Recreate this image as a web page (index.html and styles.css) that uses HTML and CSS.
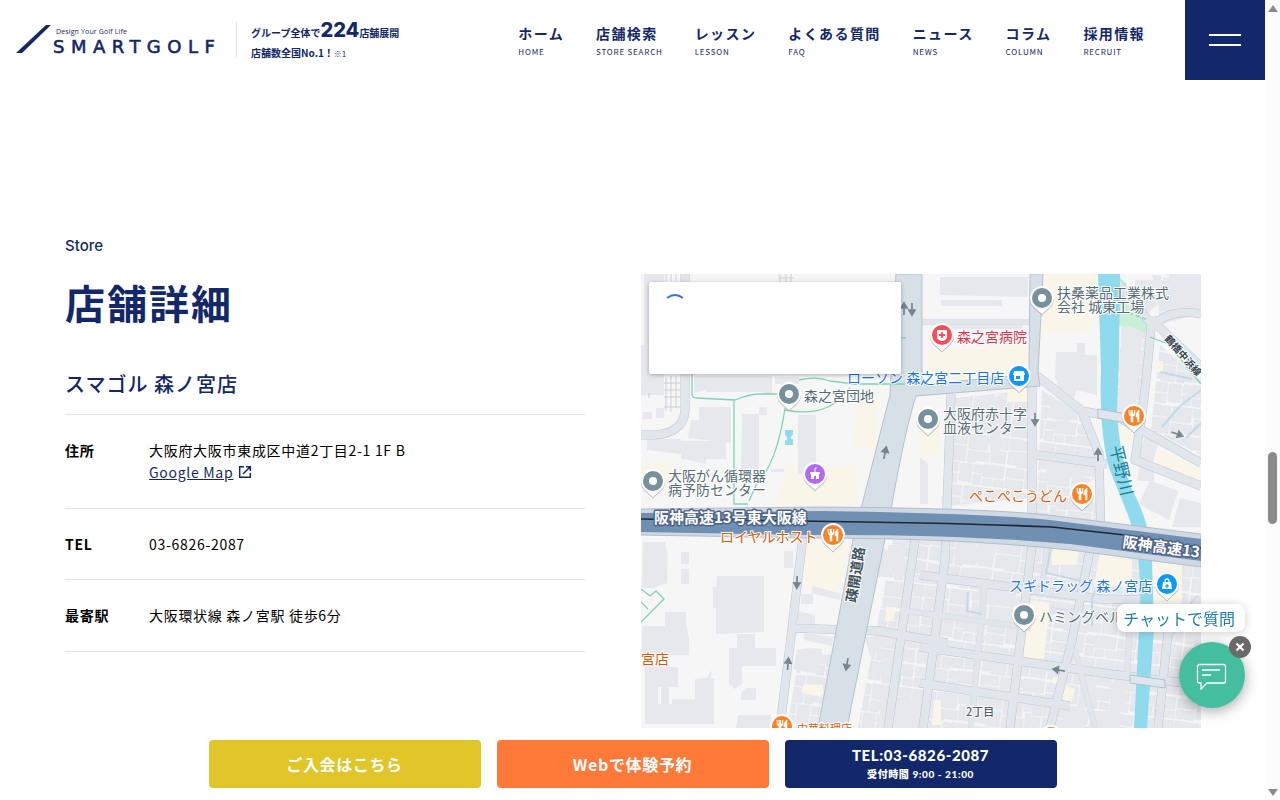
FILE: index.html
```html
<!DOCTYPE html>
<html lang="ja">
<head>
<meta charset="utf-8">
<meta name="viewport" content="width=device-width, initial-scale=1">
<title>スマゴル 森ノ宮店 | SMART GOLF</title>
<link rel="stylesheet" href="styles.css">
</head>
<body>
<div class="page">
  <header class="header">
    <a class="logo" href="#" aria-label="SMART GOLF">
      <svg width="206" height="36" viewBox="0 0 206 36" aria-hidden="true">
        <path d="M30 3h5L6 31H0z"/>
        <text class="logo-tag" x="40" y="12">Design Your Golf Life</text>
        <text class="logo-name" x="37" y="31">SMARTGOLF</text>
      </svg>
    </a>
    <p class="claim">グループ全体で<b>224</b>店舗展開<br>店舗数全国No.1！<small>※1</small></p>
    <nav class="nav">
      <a href="#">ホーム<span>HOME</span></a>
      <a href="#">店舗検索<span>STORE SEARCH</span></a>
      <a href="#">レッスン<span>LESSON</span></a>
      <a href="#">よくある質問<span>FAQ</span></a>
      <a href="#">ニュース<span>NEWS</span></a>
      <a href="#">コラム<span>COLUMN</span></a>
      <a href="#">採用情報<span>RECRUIT</span></a>
    </nav>
    <button class="menu" type="button" aria-label="メニュー"><i></i><i></i></button>
  </header>

  <main class="main">
    <section class="detail">
      <p class="eyebrow">Store</p>
      <h1>店舗詳細</h1>
      <h2>スマゴル 森ノ宮店</h2>
      <dl>
        <div class="row"><dt>住所</dt><dd>大阪府大阪市東成区中道2丁目2-1 1F B<br><a href="#">Google Map</a><svg class="ext" width="14" height="14" viewBox="0 0 14 14" aria-hidden="true"><path d="M6 1.700H1.700v10.600h10.600V8M8 1.700h4.300V6M12 2L5 9"/></svg></dd></div>
        <div class="row"><dt>TEL</dt><dd>03-6826-2087</dd></div>
        <div class="row"><dt>最寄駅</dt><dd>大阪環状線 森ノ宮駅 徒歩6分</dd></div>
      </dl>
    </section>

    <section class="map" aria-label="地図">
      <svg class="map-art" viewBox="641 274 560 454" preserveAspectRatio="xMinYMin slice">
        <defs>
          <path id="drop" d="M0 16.500C-2 13-12 9-12 0A12 12 0 1 1 12 0C12 9 2 13 0 16.500z"/>
          <g id="pin"><use href="#drop" fill="#8b949c" opacity=".7" y="1"/><use href="#drop" fill="#fff"/></g>
          <g id="place"><use href="#pin"/><circle r="10" fill="#78909c"/><circle r="4" fill="#fff"/></g>
          <g id="food"><use href="#pin"/><circle r="10" fill="#ff8126"/><path d="M-5-6v4q0 2 2 2v6h2v-6q2 0 2-2v-4M-2-6v5M5-6q-3 1-3 7h1.500v5H5z" fill="#fff" stroke="#fff" stroke-width=".6"/><path d="M-3.800-6v3.500M-.4-6v3.500" stroke="#ff8126" stroke-width="1"/></g>
          <g id="arrow"><path d="M0 6V-3M-3-1L0-6L3-1z" fill="#78858f" stroke="#78858f" stroke-width="1.700"/></g>
          <pattern id="houses" width="66" height="52" patternUnits="userSpaceOnUse" patternTransform="rotate(7)">
            <path d="M0 0h14v11H0zM15 1h9v10h-9zM26 0h19v15H26zM47 0h7v9h-7zM55 0h10v12H55zM0 13h9v13H0zM10 13h14v15H10zM26 17h8v11h-8zM35 17h12v9H35zM49 11h5v15h-5zM55 14h9v12h-9zM0 30h18v9H0zM20 30h12v18H20zM34 30h8v8h-8zM43 29h21v12H43zM0 41h8v9H0zM9 41h9v9H9zM34 40h8v10h-8zM44 43h9v7h-9zM55 43h10v7H55z" fill="#e6e8ed" stroke="#dcdfe6" stroke-width=".6"/>
          </pattern>
        </defs>
        <rect x="641" y="274" width="560" height="454" fill="#f6f6f6"/>

        <path d="M893 540l162 3 146 25v160H858zM955 398l74-8v108l-80 8zM1042 390l40 25 16 35 2 72-64-6zM1122 320l25 8-9 90-22-6zM1160 345l41 35v75l-50-25zM1152 274h49v40l-40 10zM800 650l35 4-18 74h-30z" fill="url(#houses)"/>

        <!-- commercial blocks -->
        <g fill="#f9f5e8">
          <path d="M855 390h22v58h-24zM641 463h33v20h-33zM785 480l2-14h70v39h-82zM928 350l102-5-2 25-100 12zM1043 274h54v42l-12 16h-45zM920 415h20v38l-14 4-6-5zM1007 389h22v13h-22zM1157 450l44 15v18l-43-9zM805 544h45l-10 44h-35zM804 684l19 1v12l-22-4zM1026 600l24 3-6 56-28-2zM1100 552l32 8v26h-38zM1148 562h34v40l-12 14h-22zM781 500h60v5h-62zM1050 545l29 2-2 18h-25zM1154 361h9v11h-9zM934 700h7v25h-9zM1083 485l14-7v24l-18-4zM1120 422h15l-8 28-9-5zM1053 674h11v10h-11zM1065 685l10 4-3 13h-10zM886 607h10l-3 14h-8z"/>
        </g>
        <path d="M1119 276l8 8-1 20 22 14-1 16-15-7-14-1z" fill="#c9f0d6"/>

        <!-- large buildings -->
        <g fill="#e7e8ed">
          <path d="M644 274h20v121h-23v-50h3zM694 376h78v18h-8v-2h-58v-2l-12 3zM775 377h24v7h-24zM699 407h32v36l-43-5 3-18h8zM742 414h17v-7h8v8h-8v56l-18-2zM798 415h18v58l-10 4-8-4zM681 441h45v18h-20v5l-18-4-7-1zM647 439h34v15l-34-4zM656 408h8v10h-8zM643 412h9v7h-9zM771 469h13v3h-13z"/>
          <path d="M940 277h88v20l-88-2zM941 300h61v6h-61zM950 324h72v5h-72zM1056 352h21v-9h8v12h12v40l-21-5v-10h-21zM1058 374l21 7-5 17-17-5zM1122 327l20 4-3 59-5 18h-15z"/>
          <path d="M643 542h22l3 14-1 27-14 5h-11zM681 552h8v12h-8zM681 569h8v15h-8zM717 576h47v56l-48 2V608h-3V587h3zM665 612h21v11l3 15v17h-47V626h23zM737 634h18v14h21v18h-34v18l-7 5-6-5v-36h8zM645 667h33v20h-9v17h-8v-17h-3v17h14v-5h23v-20h19v45h-69zM699 678h8l4-8v29h-8v-13h-4zM746 688h10v12h-15v-7zM738 715h33v13h-35z"/>
          <path d="M877 545l11 5v27h-11zM888 545h17v30l-17-2zM813 586l29 8-2 6-29-7zM801 594h12v10h-12zM798 611l17 4v10h-18zM804 633l29 4-1 9-28-6zM797 650l15-2 10 1v12l-8 12-21-4zM881 660h22l-5 22h-17zM882 699h39v29h-43zM865 638l15-3v15l-10 6zM784 551h9v17h-9z"/>
          <path d="M1001 397h-18l-6 32h13v25h10zM1048 460h38v17h-40zM1051 398l21 8-3 16-20-4zM1145 437l14 3-6 22-15-5zM1135 280h28v20l-15 13-13-10zM1169 274h32v40h-32zM1140 465h14v16h-17zM1150 480l28 11-9 29-30-16zM1180 498l21 5v24h-29zM920 457l8 7v40h-8z"/>
          <path d="M957 543l38 7-2 14-36-2v-8h-4zM978 588h38v17h-37zM1045 665h25v12h-21zM1080 680h16v24h-16zM1110 681l15 2v20h-15zM1059 706h26v20h-20zM1092 711h28v17h-32z"/>
        </g>

        <!-- local streets -->
        <g class="street-edge">
          <path d="M641 435h13q33-2 31-30V274M951 394L945 560L923 728M1032 380V545L1010 728M1036 375L1082 411L1120 418L1201 463M1082 411L1099 454L1101 540M1030 454l77 10M1152 316Q1145 400 1138 440L1135 460L1201 486M1154 322l47 45M1110 274l43 52Q1170 308 1201 314M803 536L780 728M789 628l90 3 68 12M915 540l-27 188M920 575l180 24 40 1M920 647l190 27 91 11M1092 540L1072 640L1050 728M920 683l150 23M1201 598l-33 35-10 95"/>
          <path class="lane" d="M920 322h110M1050 610l86 10M1047 543l-5 50M985 580l-14 148M1130 622l-3 52M900 610l130 18M1075 650l20 78"/>
        </g>
        <g class="street">
          <path d="M641 435h13q33-2 31-30V274M951 394L945 560L923 728M1032 380V545L1010 728M1036 375L1082 411L1120 418L1201 463M1082 411L1099 454L1101 540M1030 454l77 10M1152 316Q1145 400 1138 440L1135 460L1201 486M1154 322l47 45M1110 274l43 52Q1170 308 1201 314M803 536L780 728M789 628l90 3 68 12M915 540l-27 188M920 575l180 24 40 1M920 647l190 27 91 11M1092 540L1072 640L1050 728M920 683l150 23M1201 598l-33 35-10 95"/>
          <path class="lane" d="M920 322h110M1050 610l86 10M1047 543l-5 50M985 580l-14 148M1130 622l-3 52M900 610l130 18M1075 650l20 78"/>
        </g>

        <!-- river -->
        <path d="M1098 274h22l-1 85-2 52Q1119 451 1130 486Q1150 520 1152 560L1154 628L1147 728H1134L1140 610Q1142 552 1128 515L1109 468Q1099 430 1101 370z" fill="#90daee"/>
        <path d="M1098 409l40 7v9l-40-7zM1130 675l35 5v8l-35-5z" fill="#e0e6ed" stroke="#b4bfcb" stroke-width="1"/>

        <!-- main roads -->
        <path d="M896 274h26v111l107-11 1-100h13l-5 100 2 12-124 10q-10 30-24 108L847 728H818L853 540L890 395z" fill="#d7e0e7" stroke="#b5c1cb" stroke-width="1"/>

        <!-- paths and rails -->
        <g fill="none" stroke="#82d2b2" stroke-width="1.300">
          <path d="M692 374v20q0 4 5 4l38 2q14-6 25-6h33M799 380q18-4 31 1l25 3h50M785 410q32 6 50-7l15-15M734 400v104h14M785 408q-8 55-28 75l-8 18M641 589l9 7 6-5 8 8-23 23M641 602l7 7M896 338h10"/>
          <path d="M1150 337l18 7 33 40"/><path d="M1129 313l19 7" stroke-dasharray="4 3"/>
        </g>
        <path d="M666 378v33M671 376v36M676 376v32M664 383h17M664 390h17M664 397h17M664 407h17M666 274v7M671 274v7M676 274v7M778 278h16M780 274v8M786 274v8M791 274v8M649 393v5" fill="none" stroke="#cacfd7"/>
        <path d="M785 430h8v4l-2 3v2h2v6h-8v-5h2v-3l-2-2z" fill="#90daee"/>
        <path d="M1160 372l32 7M1162 427l17-20 22-17M1186 438l15-15M968 592l-1 19 15 3M1095 591l-3 8v27M1053 540l-7 33 35 8" fill="none" stroke="#c5d8e7" stroke-width="2"/>

        <!-- expressway -->
        <path d="M641 509L820 507Q980 508 1048 515L1201 534V567L1070 550Q960 538 810 538L641 535z" fill="#d0d9e3" stroke="#b1bdcb"/>
        <path d="M641 513L820 511Q980 513 1050 520L1201 539V561L1070 544Q960 534 810 535L641 532z" fill="#7090b3"/>
        <path d="M641 519L800 521Q960 523 1052 527L1125 535L1201 548" fill="none" stroke="#20272f" stroke-width="1.600"/>

        <use href="#arrow" transform="translate(904 309)"/><use href="#arrow" transform="translate(912 309) rotate(180)"/>
        <use href="#arrow" transform="translate(885 453) rotate(12)"/><use href="#arrow" transform="translate(1035 419) rotate(180)"/>
        <use href="#arrow" transform="translate(1098 455)"/><use href="#arrow" transform="translate(1177 434) rotate(110)"/>
        <use href="#arrow" transform="translate(797 582) rotate(182)"/><use href="#arrow" transform="translate(788 664) rotate(5)"/>
        <use href="#arrow" transform="translate(847 664) rotate(190)"/><use href="#arrow" transform="translate(1059 670) rotate(-80)"/>

        <g class="label">
          <text x="1057" y="298">扶桑薬品工業株式</text><text x="1057" y="312">会社 城東工場</text>
          <text x="804" y="401">森之宮団地</text>
          <text x="943" y="419">大阪府赤十字</text><text x="943" y="433">血液センター</text>
          <text x="668" y="481">大阪がん循環器</text><text x="668" y="495">病予防センター</text>
          <text x="1039" y="622">ハミングベル</text>
          <text x="957" y="342" class="red">森之宮病院</text>
          <text x="847" y="383" class="blue">ローソン 森之宮二丁目店</text>
          <text x="1009" y="591" class="blue">スギドラッグ 森ノ宮店</text>
          <text x="969" y="501" class="orange">ぺこぺこうどん</text>
          <text x="720" y="542" class="orange">ロイヤルホスト</text>
          <text x="641" y="664" class="orange">宮店</text>
          <text x="797" y="733" class="orange small">中華料理店</text>
          <text x="966" y="716" class="small dark">2丁目</text>
          <text class="road" transform="translate(856 603) rotate(-81)">疎開道路</text>
          <text class="rail" transform="translate(1164 339) rotate(49)">鶴橋中浜線</text>
          <text class="river" transform="translate(1110 447) rotate(77)">平野川</text>
          <text class="express" x="654" y="523">阪神高速13号東大阪線</text>
          <text class="express" transform="translate(1122 547) rotate(8)">阪神高速13</text>
        </g>

        <use href="#place" x="1042" y="298"/><use href="#place" x="789" y="394"/><use href="#place" x="928" y="419"/>
        <use href="#place" x="653" y="481"/><use href="#place" x="1024" y="615"/>
        <use href="#food" x="1134" y="416"/><use href="#food" x="1082" y="494"/><use href="#food" x="833" y="535"/>
        <use href="#food" x="782" y="726"/><use href="#food" x="1051" y="737"/>
        <g transform="translate(942 335)"><use href="#pin"/><circle r="10" fill="#fa4b59"/><path d="M-5-5H5V2Q5 5 0 6Q-5 5-5 2z" fill="#fff"/><path d="M-3 0h6M0-3v6" stroke="#fa4b59" stroke-width="1.800"/></g>
        <g transform="translate(1019 376)"><use href="#pin"/><circle r="10" fill="#0a98ff"/><path d="M-5-5H5l1 4h-1v6h-10v-6h-1zM-3 0v3h4V0z" fill="#fff" fill-rule="evenodd"/></g>
        <g transform="translate(1167 584)"><use href="#pin"/><circle r="10" fill="#0a98ff"/><path d="M-4-2H4L5 5H-5z" fill="#fff"/><path d="M-2-2q0-3 2-3t2 3" fill="none" stroke="#fff" stroke-width="1.300"/><path d="M-2 2h4M0 0v4" stroke="#0a98ff" stroke-width="1.200"/></g>
        <g transform="translate(815 474)"><use href="#pin"/><circle r="10" fill="#b268f8"/><path d="M-5-2H5V0H4v5H1V2h-2v3h-3V0h-1z" fill="#fff"/><path d="M0-2v-4h2" stroke="#fff" fill="none"/></g>
      </svg>
      <div class="info" role="status" aria-label="読み込み中">
        <svg width="20" height="8" viewBox="0 0 20 8" aria-hidden="true"><path d="M2 6Q10 0 18 6" fill="none" stroke="#3b72e0" stroke-width="2"/></svg>
      </div>
    </section>
  </main>

  <footer class="cta">
    <a class="join" href="#">ご入会はこちら</a>
    <a class="trial" href="#">Webで体験予約</a>
    <a class="tel" href="tel:03-6826-2087">TEL:03-6826-2087<small>受付時間 9:00 - 21:00</small></a>
  </footer>
</div>

<aside class="chat">
  <span class="chat-label">チャットで質問</span>
  <button class="chat-open" type="button" aria-label="チャットを開く">
    <svg width="32" height="30" viewBox="0 0 32 30" aria-hidden="true"><path d="M3.500 4.500h24q2 0 2 2V21q0 2-2 2H11l-6 6V23H3.500q-2 0-2-2V6.500q0-2 2-2z"/><path d="M6 10h18M6 15h9"/></svg>
  </button>
  <button class="chat-close" type="button" aria-label="閉じる"><svg width="10" height="10" viewBox="0 0 10 10" aria-hidden="true"><path d="M1.500 1.500l7 7M8.500 1.500l-7 7"/></svg></button>
</aside>

<div class="scrollbar" aria-hidden="true"><i class="up"></i><i class="thumb"></i><i class="down"></i></div>
</body>
</html>
```

FILE: styles.css
```css
* { box-sizing: border-box; margin: 0; padding: 0; }

body {
  display: flex;
  height: 100vh;
  overflow: hidden;
  background: #fff;
  color: #000;
  font-family: "Noto Sans CJK JP", sans-serif;
}

a { color: inherit; text-decoration: none; }
button { border: 0; font: inherit; cursor: pointer; }

.page { flex: 1; min-width: 0; display: flex; flex-direction: column; }

/* header */
.header { display: flex; align-items: center; height: 80px; color: #12286a; }
.logo { margin: 0 14px 0 16px; }
.logo svg { display: block; fill: #12286a; overflow: visible; }
.logo-tag { font: 400 7px "Open Sans", sans-serif; letter-spacing: 0.02em; }
.logo-name {
  stroke: #12286a;
  stroke-width: 0.6px;
  font: 400 18px "DejaVu Sans", sans-serif;
  letter-spacing: 0.36em;
}
.claim {
  display: flow-root;
  padding: 0 0 0 15px;
  margin-top: 6px;
  background: linear-gradient(#e5e5e5, #e5e5e5) left top / 1px 35px no-repeat;
  font-size: 10px;
  font-weight: 700;
  line-height: 20px;
  white-space: nowrap;
}
.claim b { font: 800 20px/16px Inter, sans-serif; }
.claim small { font-size: 8px; font-weight: 400; }
.nav { display: flex; gap: 32px; margin-left: auto; padding: 4px 40px 0 0; }
.nav a {
  font-size: 14px;
  font-weight: 700;
  line-height: 20px;
  letter-spacing: 0.1em;
  white-space: nowrap;
}
.nav span {
  display: block;
  font-size: 8px;
  font-weight: 400;
  line-height: 18px;
  letter-spacing: 0.1em;
}
.menu {
  display: flex;
  flex-direction: column;
  align-items: center;
  justify-content: center;
  gap: 8px;
  width: 80px;
  height: 80px;
  background: #12286a;
}
.menu i { width: 32px; height: 2px; background: #fff; }

/* store details */
.main {
  flex: 1;
  min-height: 0;
  display: grid;
  grid-template-columns: 13fr 14fr;
  gap: 56px;
  padding: 0 64px 0 65px;
}
.detail { padding-top: 154px; }
.detail h1, .detail h2, .row { letter-spacing: 0.05em; }
.eyebrow { color: #12286a; font: 500 15px/24px Inter, sans-serif; }
h1 { margin-top: 14px; color: #12286a; font-size: 40px; font-weight: 700; line-height: 60px; }
h2 {
  margin-top: 36px;
  padding-bottom: 14px;
  border-bottom: 1px solid #e5e5e5;
  color: #12286a;
  font-size: 20px;
  font-weight: 500;
  line-height: 32px;
}
.row {
  display: flex;
  padding: 24px 0;
  border-bottom: 1px solid #e5e5e5;
  font-size: 14px;
  line-height: 1.6;
}
.row dt { width: 84px; font-weight: 700; }
.row a { color: #12286a; text-decoration: underline; }
.ext { margin-left: 5px; vertical-align: -1px; fill: none; stroke: #12286a; stroke-width: 1.5; }

/* map */
.map { position: relative; margin-top: 194px; overflow: hidden; }
.map-art { display: block; width: 100%; height: 100%; }
.info {
  position: absolute;
  top: 8px;
  left: 8px;
  width: 252px;
  height: 92px;
  padding: 10px 16px;
  border-radius: 2px;
  background: #fff;
  box-shadow: 0 1px 4px rgba(0, 0, 0, 0.3);
}
.info svg { display: block; }
.street-edge, .street { fill: none; stroke-linejoin: round; }
.street-edge { stroke: #bdc6d1; stroke-width: 9; }
.street { stroke: #e1e6ed; stroke-width: 8; }
.street-edge .lane { stroke: #d3dae2; stroke-width: 6; }
.street .lane { stroke-width: 5; }
.label {
  fill: #566c76;
  stroke: #fff;
  stroke-width: 2px;
  stroke-linejoin: round;
  paint-order: stroke;
  font-size: 14px;
}
.label .red { fill: #df3347; }
.label .blue { fill: #1a73e8; }
.label .orange { fill: #d55b08; }
.label .small { font-size: 11px; }
.label .dark { fill: #505f69; font-weight: 500; }
.label .road { fill: #41525d; font-weight: 700; }
.label .rail { fill: #31424d; font-size: 10px; font-weight: 700; }
.label .river { fill: #168096; stroke: none; font-size: 17px; }
.label .express { fill: #fff; stroke: #4e6388; stroke-width: 3px; font-size: 15px; font-weight: 700; }

/* bottom actions */
.cta { display: flex; justify-content: center; gap: 16px; padding: 12px 16px; }
.cta a {
  display: flex;
  flex-direction: column;
  align-items: center;
  justify-content: center;
  width: 272px;
  height: 48px;
  border-radius: 4px;
  color: #fff;
  font-size: 16px;
  font-weight: 700;
  letter-spacing: 0.04em;
}
.cta .join { background: #e1c529; }
.cta .trial { background: #ff7938; }
.cta .tel { background: #12286a; font: 900 15px/20px Lato, "Noto Sans CJK JP", sans-serif; }
.cta small { font-size: 10px; line-height: 18px; }

/* chat widget */
.chat {
  position: fixed;
  right: 35px;
  bottom: 92px;
  display: flex;
  flex-direction: column;
  align-items: flex-end;
  gap: 10px;
}
.chat-label {
  padding: 0 10px 0 6px;
  border-radius: 8px;
  background: #fff;
  box-shadow: 0 1px 8px rgba(0, 0, 0, 0.2);
  color: #217db5;
  font-size: 16px;
  line-height: 28px;
}
.chat-open {
  display: grid;
  place-items: center;
  width: 66px;
  height: 66px;
  border-radius: 50%;
  background: #45be9f;
  box-shadow: 0 3px 14px rgba(0, 0, 0, 0.35);
}
.chat-open svg { fill: none; stroke: #fff; stroke-width: 1.3; }
.chat-close {
  position: absolute;
  top: 32px;
  right: -6px;
  display: grid;
  place-items: center;
  width: 22px;
  height: 22px;
  border-radius: 50%;
  background: #6a6a6a;
}
.chat-close svg { stroke: #fff; stroke-width: 2.2; }

/* scroll track */
.scrollbar {
  display: flex;
  flex-direction: column;
  align-items: center;
  justify-content: space-between;
  width: 15px;
  padding: 5px 0 4px;
  background: #fcfcfc;
}
.up, .down { border: 5px solid transparent; border-top-width: 0; border-bottom: 7px solid #8b8b8b; }
.down { border-bottom-width: 0; border-top: 7px solid #8b8b8b; }
.thumb { width: 9px; height: 72px; margin-top: 174px; border-radius: 5px; background: #8b8b8b; }
```
